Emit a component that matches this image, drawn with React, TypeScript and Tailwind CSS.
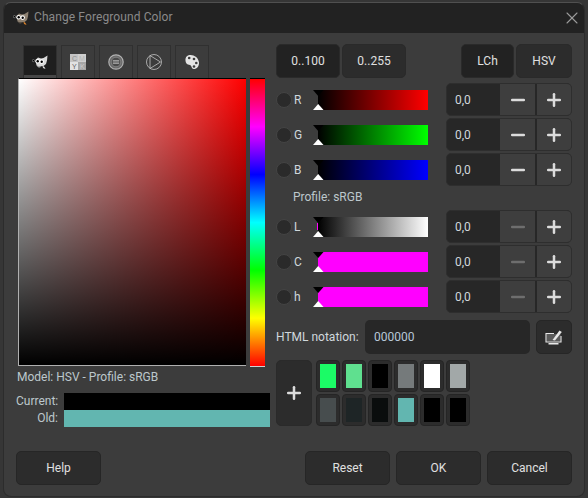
import React from 'react'
import { X, Minus, Plus } from 'lucide-react'

const Wilber = ({ className, body, dark, tongue }: { className: string; body: string; dark: string; tongue: string }) => (
  <svg viewBox="0 0 16 15" className={className}>
    <path d="M3.5 5 L6 2.5 L9 3.5 L11.5 3 L15.5 0.5 L15 5.5 L14 9 L11.5 11 L7 11.5 L4.5 10.5 Z" fill={body} />
    <path d="M10.5 10.5 L12.5 12 L13.5 14 L11 13 Z" fill={tongue} />
    <path d="M5 11 L9 11.5 L8 12.5 L6 12.2 Z" fill={dark} />
    <circle cx="1.4" cy="5.6" r="1.1" fill="#000" stroke="#ddd" strokeWidth="0.4" />
    <circle cx="5.6" cy="6.2" r="2.3" fill="#fff" />
    <circle cx="9.6" cy="6.6" r="2.3" fill="#fff" />
    <circle cx="5.7" cy="6.3" r="1.2" fill="#000" />
    <circle cx="9.7" cy="6.7" r="1.2" fill="#000" />
  </svg>
)

const CmykIcon = () => (
  <svg viewBox="0 0 16 16" className="w-4 h-4">
    <rect width="8" height="8" fill="#c4c4c4" />
    <rect x="8" width="8" height="8" fill="#cfcfcf" />
    <rect y="8" width="8" height="8" fill="#e2e2e2" />
    <rect x="8" y="8" width="8" height="8" fill="#a6a6a6" />
    <text x="2" y="7" fontSize="7" fill="#8c8c8c" fontFamily="Liberation Sans">C</text>
    <text x="9" y="7" fontSize="7" fill="#b5b5b5" fontFamily="Liberation Sans">M</text>
    <text x="2" y="15" fontSize="7" fill="#666666" fontFamily="Liberation Sans">Y</text>
    <text x="10" y="15" fontSize="7" fill="#cccccc" fontFamily="Liberation Sans">K</text>
  </svg>
)

const WaterIcon = () => (
  <svg viewBox="0 0 16 16" className="w-4 h-4" fill="none">
    <circle cx="8" cy="8" r="7.2" fill="#6a6a6a" stroke="#b0b0b0" strokeWidth="1.2" />
    <circle cx="8" cy="8" r="4.8" fill="#4a4a4a" stroke="#9a9a9a" strokeWidth="0.6" />
    <path d="M4.8 6.6h6.4M4.8 8h6.4M4.8 9.4h6.4" stroke="#c8c8c8" strokeWidth="0.7" />
  </svg>
)

const WheelIcon = () => (
  <svg viewBox="0 0 16 16" className="w-4 h-4" fill="none" stroke="#c4c4c4" strokeWidth="0.8">
    <circle cx="8" cy="8" r="7.5" />
    <path d="M4 1.5 L14.5 8 L4 14.5 Z" />
  </svg>
)

const PaletteIcon = () => (
  <svg viewBox="0 0 16 16" className="w-4 h-4">
    <path d="M4.5 1.2 C9 0 14.5 3 15 8.5 C15.3 12.5 12.5 15.3 9.5 15 C7.6 14.8 7.8 12.6 6.8 11.5 C5.8 10.4 4.2 11 3 10 C1.2 8.5 0.2 2.4 4.5 1.2 Z" fill="#e4e4e4" />
    <circle cx="5.2" cy="4" r="1.3" fill="#3c3c3c" />
    <circle cx="10" cy="5" r="1.3" fill="#3c3c3c" />
    <circle cx="12.3" cy="9" r="1.3" fill="#3c3c3c" />
    <circle cx="10" cy="12.5" r="1.3" fill="#3c3c3c" />
  </svg>
)

const tabs = [
  <Wilber className="w-4 h-[15px]" body="#d8d8d8" dark="#bbbbbb" tongue="#dddddd" />,
  <CmykIcon />,
  <WaterIcon />,
  <WheelIcon />,
  <PaletteIcon />,
]

const Toggle = ({ label, w, active }: { label: string; w: string; active?: boolean }) => (
  <button className={`${w} h-[34px] rounded-[5px] border border-[#2a2a2a] text-[#e0e0e0] flex items-center justify-center ${active ? 'bg-[#222222]' : 'bg-[#2c2c2c]'}`}>
    {label}
  </button>
)

const Slider = ({ track, marker }: { track: string; marker?: boolean }) => (
  <div className="relative w-[115px] h-5 pl-[5px]">
    <div className={`w-[110px] h-5 ${track}`} />
    <svg viewBox="0 0 11 20" className="absolute left-0 top-0 w-[11px] h-5">
      <path d="M0 0 H10.5 L5.2 6 Z" fill="#000" />
      <path d="M0 20 H10.5 L5.2 14 Z" fill="#fff" />
      {marker && <path d="M4.5 6V13" stroke="#f0f" strokeWidth="1" />}
    </svg>
  </div>
)

const ColorRow = ({ label, track, minusOff, marker }: { label: string; track: string; minusOff?: boolean; marker?: boolean }) => (
  <div className="flex items-center h-[33px]">
    <span className="w-[16px] h-[16px] shrink-0 rounded-full bg-[#2a2a2a] border border-[#444444]" />
    <span className="w-[21px] pl-[2px] text-[#d0d8dc]">{label}</span>
    <Slider track={track} marker={marker} />
    <div className="ml-[18px] w-[126px] h-[33px] flex rounded-[5px] bg-[#272727] border border-[#2e2e2e]">
      <span className="w-[53px] pl-[8px] flex items-center text-[#d0d8dc]">0,0</span>
      <span className={`w-[35px] flex items-center justify-center bg-[#3e3e3e] mr-[2px] ${minusOff ? 'text-[#6e6e6e]' : 'text-[#dcdcdc]'}`}>
        <Minus size={20} strokeWidth={3} />
      </span>
      <span className="w-[34px] flex items-center justify-center bg-[#3e3e3e] rounded-r-[4px] text-[#dcdcdc]">
        <Plus size={20} strokeWidth={3} />
      </span>
    </div>
  </div>
)

const swatches = [
  ['bg-[#1bfb66]', 'bg-[#5fe08f]', 'bg-[#000000]', 'bg-[#757a7b]', 'bg-[#ffffff]', 'bg-[#a2a8a8]'],
  ['bg-[#474d4e]', 'bg-[#1e2526]', 'bg-[#0a0d0d]', 'bg-[#62b6b0]', 'bg-[#000000]', 'bg-[#000000]'],
]

const FootBtn = ({ label }: { label: string }) => (
  <button className="w-[85px] h-[34px] rounded-[5px] border border-[#262626] bg-[#2c2c2c] text-[#e0e0e0] flex items-center justify-center">
    {label}
  </button>
)

export default function App() {
  return (
    <div className="w-[588px] h-[498px] overflow-hidden bg-[#363636] pt-[2px] px-[3px] text-[12px] font-['Roboto',sans-serif]">
      <div className="h-[495px] rounded-[8px] bg-[#3c3c3c] border border-[#2c2c2c] border-t-[#505050] overflow-hidden">
        {/* Title bar */}
        <div className="h-[30px] bg-[#222222] flex items-center pl-[9px] pr-[2px]">
          <Wilber className="w-4 h-[15px]" body="#8d8172" dark="#5a5248" tongue="#d9822b" />
          <span className="ml-[5px] mb-[2px] text-[#8a8a8a] tracking-[0.1px]">Change Foreground Color</span>
          <X size={20} strokeWidth={1.3} className="ml-auto text-[#9a9a9a]" />
        </div>

        <div className="px-[12px] pt-[11px]">
          <div className="flex gap-[6px]">
            {/* Left column */}
            <div className="w-[254px]">
              <div className="flex gap-[4px] pl-[7px] mt-px">
                {tabs.map((icon, i) => (
                  <div
                    key={i}
                    className={`w-[34px] h-[33px] flex items-center justify-center border border-b-0 border-[#303030] ${i === 0 ? 'bg-[#1e1e1e] shadow-[inset_0_-3px_0_#474747]' : ''}`}
                  >
                    {icon}
                  </div>
                ))}
              </div>
              <div className="flex gap-[4px] pl-[2px]">
                <div className="w-[228px] h-[288px] border-t border-t-black border-l border-b border-l-[#b0b0b0] border-b-[#b0b0b0] bg-[linear-gradient(to_top,#000,transparent),linear-gradient(to_right,#fff,#f00)]" />
                <div className="w-[15px] h-[289px] border-t border-t-black border-b border-b-[#d0d0d0] bg-[linear-gradient(to_bottom,#f00,#f0f,#00f,#0ff,#0f0,#ff0,#f00)]" />
              </div>
              <div className="pl-[1px] mt-px text-[#bcc8cc]">Model: HSV - Profile: sRGB</div>
              <div className="flex mt-[7px]">
                <div className="w-[42px] text-right text-[#bcc8cc] leading-[17px]">
                  <div>Current:</div>
                  <div>Old:</div>
                </div>
                <div className="ml-[6px] w-[206px]">
                  <div className="h-[17px] bg-black" />
                  <div className="h-[17px] bg-[#62b6b0]" />
                </div>
              </div>
            </div>

            {/* Right column */}
            <div className="w-[296px]">
              <div className="flex">
                <Toggle label="0..100" w="w-[64px]" active />
                <div className="ml-[2px]"><Toggle label="0..255" w="w-[64px]" /></div>
                <div className="ml-auto flex gap-[2px]">
                  <Toggle label="LCh" w="w-[53px]" active />
                  <Toggle label="HSV" w="w-[56px]" />
                </div>
              </div>
              <div className="mt-[5px] flex flex-col gap-[2px]">
                <ColorRow label="R" track="bg-[linear-gradient(to_right,#000,#f00)]" />
                <ColorRow label="G" track="bg-[linear-gradient(to_right,#000,#0f0)]" />
                <ColorRow label="B" track="bg-[linear-gradient(to_right,#000,#00f)]" />
              </div>
              <div className="h-[24px] pl-[17px] pb-[2px] flex items-center text-[#bcc8cc]">Profile: sRGB</div>
              <div className="flex flex-col gap-[2px]">
                <ColorRow label="L" track="bg-[linear-gradient(to_right,#000,#fff)]" minusOff marker />
                <ColorRow label="C" track="bg-[#ff00ff]" minusOff />
                <ColorRow label="h" track="bg-[#ff00ff]" minusOff />
              </div>
              <div className="mt-[7px] flex items-center h-[34px]">
                <span className="w-[89px] text-[#d0d8dc]">HTML notation:</span>
                <div className="w-[165px] h-[34px] rounded-[5px] bg-[#272727] pl-[9px] flex items-center text-[#b8c8d8]">000000</div>
                <button className="ml-[6px] w-[36px] h-[34px] rounded-[5px] border border-[#262626] bg-[#2c2c2c] flex items-center justify-center">
                  <svg viewBox="0 0 18 16" className="w-[18px] h-4" fill="none">
                    <rect x="1.5" y="5" width="14" height="7.5" fill="#5a5a5a" />
                    <path d="M9 4.5 H1 V13 H16 V7" stroke="#e8e8e8" strokeWidth="1.1" />
                    <path d="M3.5 14 H13.5 V15.6 H3.5 Z" fill="#e8e8e8" />
                    <path d="M7.5 11 L14.5 1.5 L16.8 3 L10 11.5 Z" fill="#e8e8e8" />
                  </svg>
                </button>
              </div>
              <div className="mt-[6px] flex">
                <button className="w-[36px] h-[66px] rounded-[5px] border border-[#2a2a2a] bg-[#2c2c2c] flex items-center justify-center text-[#dcdcdc]">
                  <Plus size={20} strokeWidth={3} />
                </button>
                <div className="ml-[4px] flex flex-col gap-[2px]">
                  {swatches.map((row, r) => (
                    <div key={r} className="flex gap-[2px]">
                      {row.map((c, i) => (
                        <div key={i} className="w-[24px] h-[32px] rounded-[4px] border border-[#252525] bg-[#2c2c2c] p-[3px]">
                          <div className={`w-full h-full ${c}`} />
                        </div>
                      ))}
                    </div>
                  ))}
                </div>
              </div>
            </div>
          </div>

          {/* Footer */}
          <div className="mt-[24px] flex">
            <FootBtn label="Help" />
            <div className="ml-auto flex gap-[6px]">
              <FootBtn label="Reset" />
              <FootBtn label="OK" />
              <FootBtn label="Cancel" />
            </div>
          </div>
        </div>
      </div>
    </div>
  )
}
